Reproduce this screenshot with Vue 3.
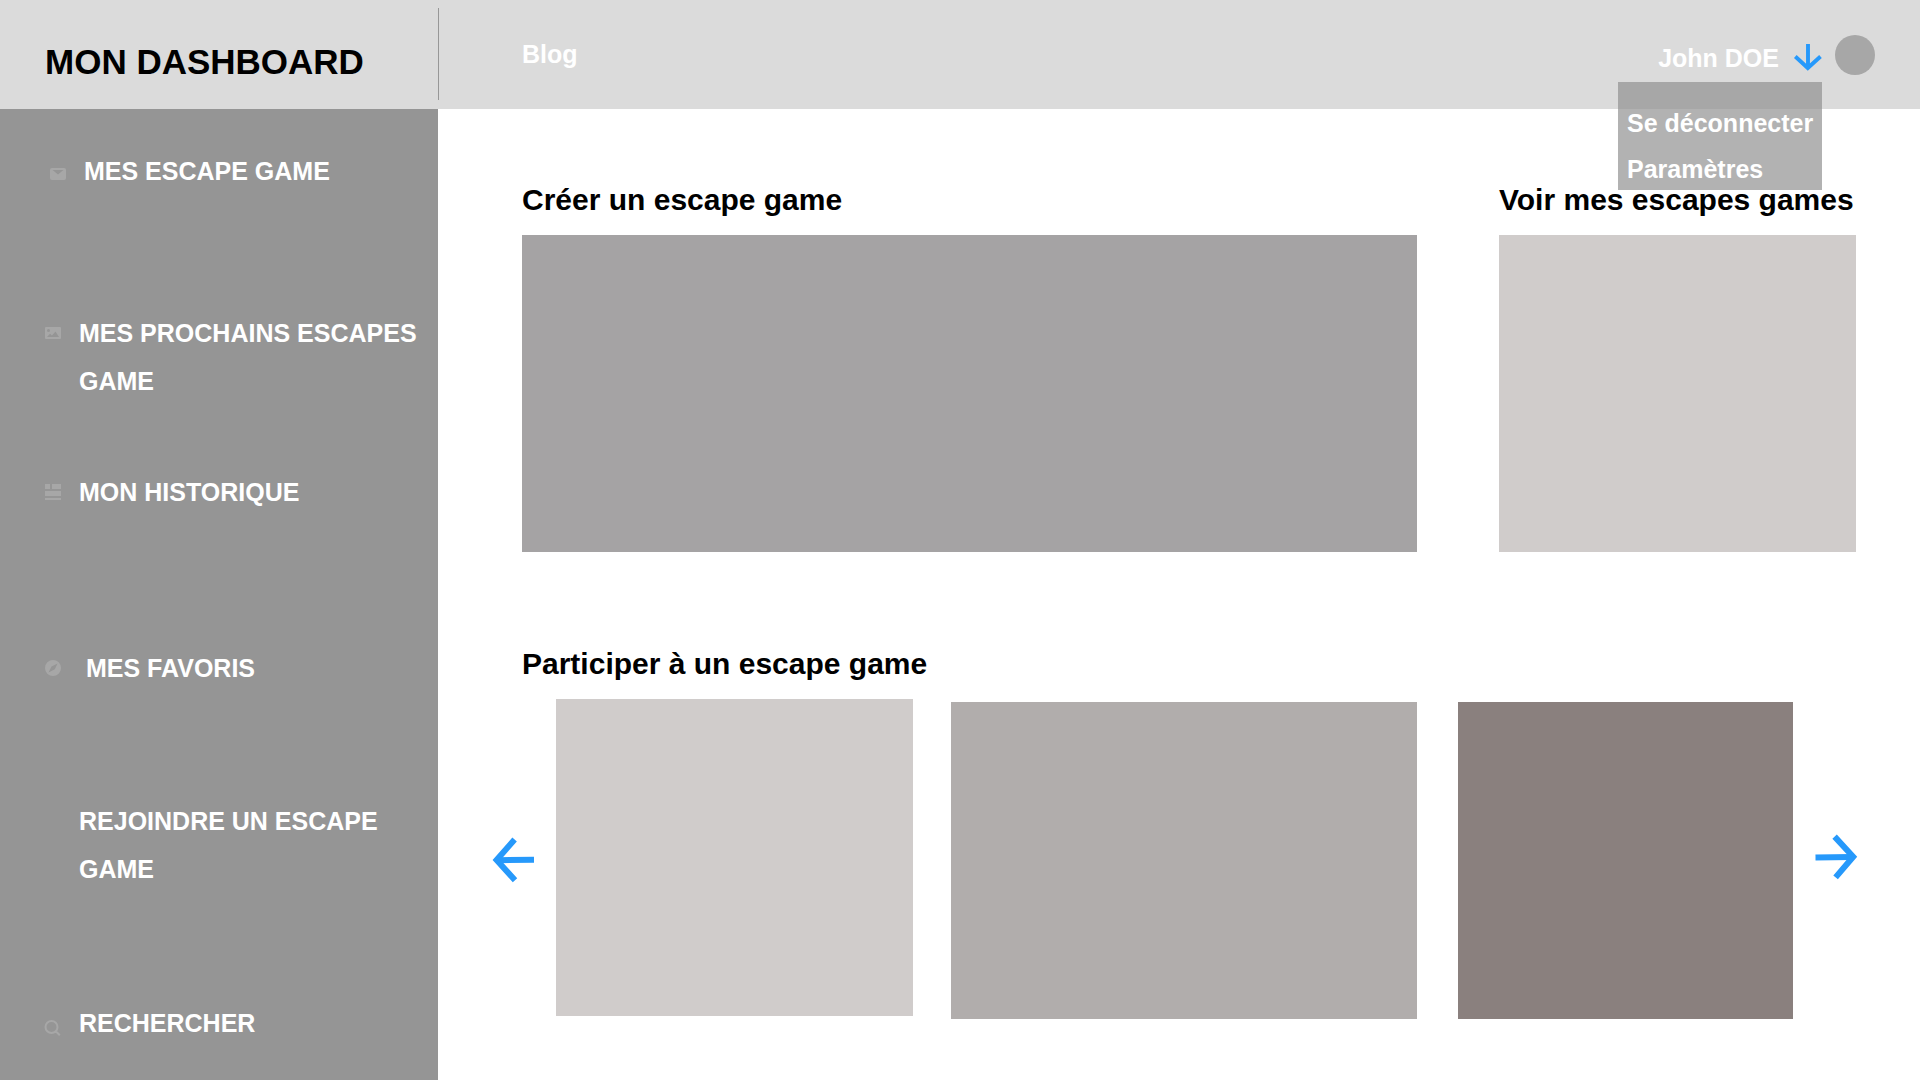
<script setup>
import { ref } from 'vue'

const menuOpen = ref(true)

const links = [
  { label: 'MES ESCAPE GAME', icon: 'mail', variant: 'indented' },
  { label: 'MES PROCHAINS ESCAPES GAME', icon: 'image' },
  { label: 'MON HISTORIQUE', icon: 'list' },
  { label: 'MES FAVORIS', icon: 'compass', variant: 'spaced' },
  { label: 'REJOINDRE UN ESCAPE GAME' },
  { label: 'RECHERCHER', icon: 'search' }
]
</script>

<template>
  <div class="page">
    <header class="topbar">
      <h1 class="brand">MON DASHBOARD</h1>
      <span class="divider"></span>
      <nav class="topnav"><a href="#">Blog</a></nav>
      <div class="account">
        <button class="user" type="button" :aria-expanded="menuOpen" @click="menuOpen = !menuOpen">
          <span>John DOE</span>
          <svg class="chevron" viewBox="0 0 28 28" fill="none" stroke="#2699fb" stroke-width="3.9">
            <path d="M14 0V24M1.3 12.5L13.8 24L26.5 12.5" />
          </svg>
        </button>
        <div v-if="menuOpen" class="menu">
          <a href="#">Se déconnecter</a>
          <a href="#">Paramètres</a>
        </div>
      </div>
      <span class="avatar"></span>
    </header>

    <div class="body">
      <nav class="sidebar">
        <ul>
          <li v-for="link in links" :key="link.label">
            <a href="#" :class="link.variant">
              <span class="icon" :class="link.icon">
                <svg v-if="link.icon === 'mail'" viewBox="0 0 16 16">
                  <path fill-rule="evenodd" d="M2 1H14Q16 1 16 3V11Q16 13 14 13H2Q0 13 0 11V3Q0 1 2 1ZM2.5 3L8 7.5L13.5 3Z" />
                </svg>
                <svg v-else-if="link.icon === 'image'" viewBox="0 0 16 16">
                  <path fill-rule="evenodd" d="M1 2H15Q16 2 16 3V13Q16 14 15 14H1Q0 14 0 13V3Q0 2 1 2ZM2 12H14L10.5 6.5L7 10.5L5 8.8ZM3.5 4A1.5 1.5 0 1 0 3.5 7A1.5 1.5 0 1 0 3.5 4Z" />
                </svg>
                <svg v-else-if="link.icon === 'list'" viewBox="0 0 16 16">
                  <path d="M0 0H5V5H0ZM7 0H16V5H7ZM0 7H16V12H0ZM0 14H16V16H0Z" />
                </svg>
                <svg v-else-if="link.icon === 'compass'" viewBox="0 0 16 16">
                  <path fill-rule="evenodd" d="M8 0A8 8 0 1 0 8 16A8 8 0 1 0 8 0ZM12.5 3.5L9.8 9.2L3.5 12.5L6.5 6.6Z" />
                </svg>
                <svg v-else-if="link.icon === 'search'" viewBox="0 0 16 16">
                  <path fill="none" stroke="#a7a7a7" stroke-width="2" d="M6.5 2A6 6 0 1 0 6.5 14A6 6 0 1 0 6.5 2ZM10.8 12.3L14.8 16.3" />
                </svg>
              </span>
              <span>{{ link.label }}</span>
            </a>
          </li>
        </ul>
      </nav>

      <main class="content">
        <div class="top-row">
          <section class="create">
            <h2>Créer un escape game</h2>
            <div class="panel"></div>
          </section>
          <section class="mine">
            <h2>Voir mes escapes games</h2>
            <div class="panel"></div>
          </section>
        </div>

        <section class="join">
          <h2>Participer à un escape game</h2>
          <div class="carousel">
            <button class="arrow" type="button" aria-label="Précédent">
              <svg viewBox="0 0 42 48" fill="none" stroke="#2699fb">
                <path stroke-width="6" d="M22.6 4.6L4.6 24.9L23 45.2" />
                <path stroke-width="6" d="M6 25.2L42 24.7" />
              </svg>
            </button>
            <div class="cards">
              <div class="card first"></div>
              <div class="card second"></div>
              <div class="card third"></div>
            </div>
            <button class="arrow" type="button" aria-label="Suivant">
              <svg viewBox="0 0 42 48" fill="none" stroke="#2699fb">
                <path stroke-width="6" d="M19.6 1.6L38.2 21.8L20.6 42.4" />
                <path stroke-width="6" d="M0.5 22.5L37 22" />
              </svg>
            </button>
          </div>
        </section>
      </main>
    </div>
  </div>
</template>

<style>
body {
  margin: 0;
  background: #fff;
}
</style>

<style scoped>
.page {
  display: flex;
  flex-direction: column;
  min-height: 100vh;
  font-family: "Liberation Sans", Arial, sans-serif;
  font-size: 25px;
  font-weight: 700;
  line-height: 28px;
  color: #fff;
}

a {
  color: inherit;
  text-decoration: none;
}

button {
  border: 0;
  padding: 0;
  background: none;
  font: inherit;
  color: inherit;
  cursor: pointer;
}

svg {
  display: block;
  overflow: visible;
}

.topbar {
  display: flex;
  align-items: flex-start;
  height: 109px;
  background: #dbdbdb;
}

.brand {
  box-sizing: border-box;
  flex: none;
  width: 438px;
  margin: 0;
  padding: 42px 0 0 45px;
  font-size: 35px;
  line-height: 40px;
  color: #000;
}

.divider {
  width: 1px;
  height: 92px;
  margin-top: 8px;
  background: #979797;
}

.topnav {
  flex: 1;
  padding: 40px 0 0 83px;
}

.account {
  position: relative;
  margin-top: 44px;
}

.user {
  display: flex;
  gap: 15px;
  white-space: nowrap;
}

.chevron {
  width: 28px;
  height: 28px;
}

.menu {
  position: absolute;
  top: 38px;
  right: 0;
  z-index: 1;
  box-sizing: border-box;
  display: flex;
  flex-direction: column;
  gap: 18px;
  width: 204px;
  padding: 27px 9px 7px;
  background: rgba(146, 146, 146, 0.7);
  white-space: nowrap;
}

.avatar {
  width: 40px;
  height: 40px;
  margin: 35px 45px 0 13px;
  border-radius: 50%;
  background: #a7a7a7;
}

.body {
  display: flex;
  flex: 1;
}

.sidebar {
  flex: none;
  width: 438px;
  background: #959595;
  line-height: 48px;
}

.sidebar ul {
  display: grid;
  grid-template-rows: 162px 159px 176px 153px 202px 48px;
  margin: 0;
  padding: 38px 0 32px;
  list-style: none;
}

.sidebar a {
  display: flex;
  align-items: flex-start;
  gap: 18px;
  padding: 0 16px 0 45px;
}

.sidebar .indented {
  padding-left: 50px;
}

.sidebar .spaced {
  gap: 25px;
}

.icon {
  flex: none;
  width: 16px;
  height: 16px;
  margin-top: 16px;
  fill: #a7a7a7;
}

.icon.mail,
.icon.search {
  margin-top: 20px;
}

.content {
  flex: 1;
  min-width: 0;
  padding: 74px 0 60px;
}

h2 {
  margin: 0 0 18px;
  font-size: 30px;
  line-height: 34px;
  white-space: nowrap;
  color: #000;
}

.top-row {
  display: grid;
  grid-template-columns: minmax(0, 895fr) minmax(0, 357fr);
  gap: 82px;
  padding: 0 64px 0 84px;
}

.panel,
.card {
  height: 317px;
}

.create .panel {
  background: #a5a3a4;
}

.mine .panel {
  background: #d0cccb;
}

.join {
  margin-top: 95px;
}

.join h2 {
  padding-left: 84px;
}

.carousel {
  display: flex;
  align-items: center;
  gap: 22px;
  padding: 0 63px 0 54px;
}

.arrow {
  flex: none;
  width: 42px;
  height: 48px;
}

.cards {
  display: flex;
  flex: 1;
}

.card + .card {
  margin-top: 3px;
}

.first {
  flex: 357 1 0;
  background: #d0cccb;
}

.second {
  flex: 466 1 0;
  margin-left: 38px;
  background: #b1adac;
}

.third {
  flex: 335 1 0;
  margin-left: 41px;
  background: #8a807e;
}
</style>
